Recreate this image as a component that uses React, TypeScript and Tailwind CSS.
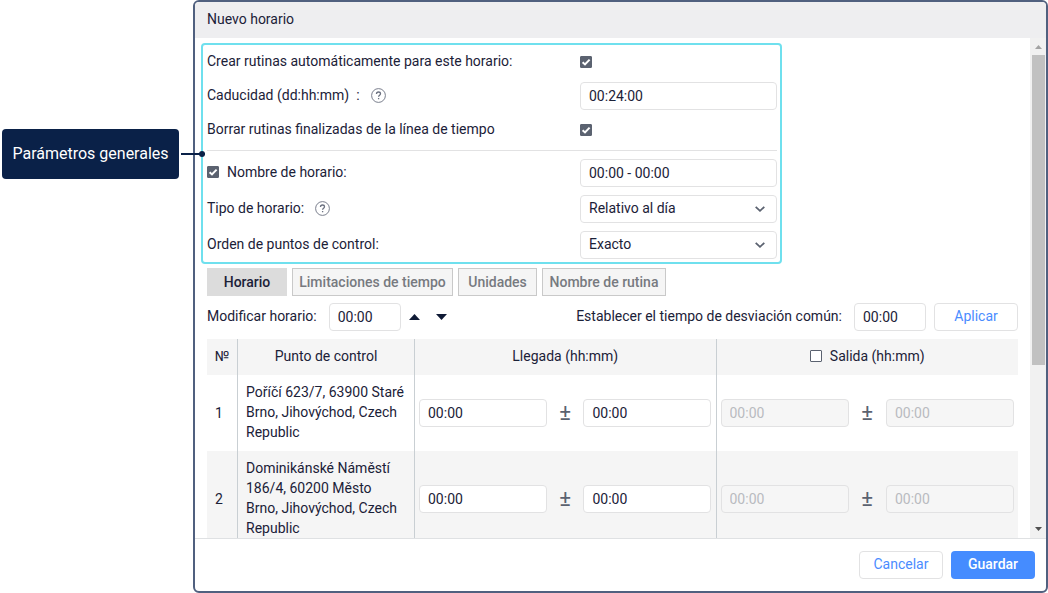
import clsx from 'clsx'
import type { InputHTMLAttributes, ReactNode, SelectHTMLAttributes } from 'react'

const tabs = [
  { label: 'Horario', width: 'w-20', active: true },
  { label: 'Limitaciones de tiempo', width: 'w-[161px]' },
  { label: 'Unidades', width: 'w-[79px]' },
  { label: 'Nombre de rutina', width: 'w-[124px]' },
]

const checkpoints = [
  'Poříčí 623/7, 63900 Staré Brno, Jihovýchod, Czech Republic',
  'Dominikánské Náměstí 186/4, 60200 Město Brno, Jihovýchod, Czech Republic',
]

const TextInput = ({ className, ...props }: InputHTMLAttributes<HTMLInputElement>) => (
  <input
    type="text"
    className={clsx(
      'h-7 min-w-0 rounded border border-[#e2e2e3] bg-white px-2 text-sm text-[#1b2138] disabled:bg-[#f6f6f6] disabled:text-[#b9bbc0]',
      className
    )}
    {...props}
  />
)

const Checkbox = (props: InputHTMLAttributes<HTMLInputElement>) => (
  <span className="grid size-3 shrink-0">
    <input
      type="checkbox"
      className="peer col-start-1 row-start-1 size-3 appearance-none rounded-[1px] border border-[#5b6270] bg-white checked:bg-[#5b6270]"
      {...props}
    />
    <svg
      viewBox="0 0 12 12"
      className="pointer-events-none invisible col-start-1 row-start-1 size-3 peer-checked:visible"
      fill="none"
      stroke="#fff"
      strokeWidth="2"
    >
      <path d="M2.6 6.2 5 8.4l4.6-4.8" />
    </svg>
  </span>
)

const Select = ({ children, ...props }: SelectHTMLAttributes<HTMLSelectElement>) => (
  <span className="grid items-center">
    <select
      className="col-start-1 row-start-1 h-7 w-full appearance-none rounded border border-[#e2e2e3] bg-white px-2 pb-0.5 text-sm text-[#1b2138]"
      {...props}
    >
      {children}
    </select>
    <svg
      viewBox="0 0 10 6"
      className="pointer-events-none col-start-1 row-start-1 mr-3 h-1.5 w-2.5 justify-self-end"
      fill="none"
      stroke="#5b6270"
      strokeWidth="1.8"
    >
      <path d="m.7.8 4.3 4L9.3.8" />
    </svg>
  </span>
)

const HelpButton = () => (
  <button type="button" aria-label="Ayuda">
    <svg viewBox="0 0 15 15" className="size-[15px]" fill="none" stroke="#6b7180">
      <circle cx="7.5" cy="7.5" r="6.9" strokeWidth="0.9" />
      <path
        d="M5.5 6c0-1.3.9-2 2-2s2 .7 2 1.8c0 1.4-1.9 1.5-1.9 3M7.6 10v1.3"
        strokeWidth="1.3"
      />
    </svg>
  </button>
)

const Field = ({ label, children }: { label: ReactNode; children: ReactNode }) => (
  <div className="grid grid-cols-[373px_1fr] items-center">
    <div className="flex items-center pb-0.5">{label}</div>
    {children}
  </div>
)

const TimePair = ({ name, disabled }: { name: string; disabled?: boolean }) => (
  <div className="flex items-center justify-between">
    <TextInput
      className="w-32"
      aria-label={name}
      defaultValue="00:00"
      disabled={disabled}
    />
    <span className="text-[22px] leading-7 text-[#5b6270]">±</span>
    <TextInput
      className="w-32"
      aria-label={`${name}, desviación`}
      defaultValue="00:00"
      disabled={disabled}
    />
  </div>
)

const Callout = () => (
  <aside className="w-[193px] shrink-0 pt-[129px] pl-0.5">
    <div className="relative flex h-[50px] w-[177px] items-center justify-center rounded bg-[#0a2148] text-base text-white">
      Parámetros generales
      <span className="absolute top-6 left-full z-10 ml-0.5 flex h-0.5 w-6 items-center justify-end bg-[#0a2148]">
        <span className="size-1.5 shrink-0 rounded-full bg-[#0a2148]" />
      </span>
    </div>
  </aside>
)

const GeneralSettings = () => (
  <section className="max-w-[581px] rounded border-2 border-[#6fe0ee] pr-[3px] pb-[3px] pl-1">
    <div className="grid auto-rows-[34px]">
      <Field
        label={
          <label htmlFor="auto">Crear rutinas automáticamente para este horario:</label>
        }
      >
        <Checkbox id="auto" defaultChecked />
      </Field>
      <Field
        label={
          <>
            <label htmlFor="expiry" className="mr-[11px] whitespace-pre">
              Caducidad (dd:hh:mm){'  '}:
            </label>
            <HelpButton />
          </>
        }
      >
        <TextInput id="expiry" defaultValue="00:24:00" />
      </Field>
      <Field
        label={
          <label htmlFor="clear">Borrar rutinas finalizadas de la línea de tiempo</label>
        }
      >
        <Checkbox id="clear" defaultChecked />
      </Field>
    </div>
    <hr className="mt-[3px] border-[#e2e2e3]" />
    <div className="grid gap-2 pt-2">
      <Field
        label={
          <label className="flex items-center gap-2">
            <Checkbox defaultChecked />
            Nombre de horario:
          </label>
        }
      >
        <TextInput aria-label="Nombre de horario" defaultValue="00:00 - 00:00" />
      </Field>
      <Field
        label={
          <>
            <label htmlFor="type" className="mr-[11px]">
              Tipo de horario:
            </label>
            <HelpButton />
          </>
        }
      >
        <Select id="type">
          <option>Relativo al día</option>
        </Select>
      </Field>
      <Field label={<label htmlFor="order">Orden de puntos de control:</label>}>
        <Select id="order">
          <option>Exacto</option>
        </Select>
      </Field>
    </div>
  </section>
)

const Schedule = () => (
  <section className="pr-3 pl-1.5">
    <div className="mt-1 flex gap-[5px]">
      {tabs.map(({ label, width, active }) => (
        <button
          key={label}
          type="button"
          className={clsx(
            'h-7 border font-medium whitespace-nowrap',
            width,
            active
              ? 'border-[#dcdcdc] bg-[#dcdcdc] text-[#1b2138]'
              : 'border-[#c9c9c9] bg-[#f5f5f5] text-[#777a80]'
          )}
        >
          {label}
        </button>
      ))}
    </div>
    <div className="mt-[7px] flex items-center">
      <label htmlFor="shift" className="mr-3 pb-0.5">
        Modificar horario:
      </label>
      <TextInput id="shift" className="w-[72px]" defaultValue="00:00" />
      <button type="button" aria-label="Adelantar" className="ml-2">
        <svg viewBox="0 0 11 6" className="h-1.5 w-[11px]" fill="#0f1a35">
          <path d="M0 6 5.5 0 11 6z" />
        </svg>
      </button>
      <button type="button" aria-label="Retrasar" className="ml-4">
        <svg viewBox="0 0 11 6" className="h-1.5 w-[11px]" fill="#0f1a35">
          <path d="M0 0h11L5.5 6z" />
        </svg>
      </button>
      <label htmlFor="deviation" className="mr-3 ml-auto pb-0.5">
        Establecer el tiempo de desviación común:
      </label>
      <TextInput id="deviation" className="w-[72px]" defaultValue="00:00" />
      <button
        type="button"
        className="ml-2 h-7 w-[84px] rounded border border-[#e2e2e3] pb-0.5 text-[#4a8cff]"
      >
        Aplicar
      </button>
    </div>
    <table className="mt-2 w-full table-fixed border-separate border-spacing-0">
      <colgroup>
        <col className="w-[31px]" />
        <col className="w-[177px]" />
        <col />
        <col />
      </colgroup>
      <thead>
        <tr className="h-9 bg-[#f5f5f5] *:border-[#c9cfd3] *:p-0 *:pb-0.5 *:font-normal *:not-last:border-r">
          <th>№</th>
          <th>Punto de control</th>
          <th>Llegada (hh:mm)</th>
          <th>
            <label className="inline-flex items-center gap-2">
              <Checkbox />
              Salida (hh:mm)
            </label>
          </th>
        </tr>
      </thead>
      <tbody>
        {checkpoints.map((address, index) => (
          <tr
            key={address}
            className="even:bg-[#f5f5f5] *:border-[#c9cfd3] *:not-last:border-r"
          >
            <td className="p-2">{index + 1}</td>
            <td className="px-2 pt-[7px] pb-[9px]">{address}</td>
            <td className="px-1">
              <TimePair name="Llegada" />
            </td>
            <td className="px-1">
              <TimePair name="Salida" disabled />
            </td>
          </tr>
        ))}
      </tbody>
    </table>
  </section>
)

const ScrollBar = () => (
  <div className="flex w-4 shrink-0 flex-col items-center bg-[#f1f1f1]" aria-hidden="true">
    <svg viewBox="0 0 16 17" className="h-[17px] w-4" fill="#a3a3a3">
      <path d="M5 11h7L8.500 7z" />
    </svg>
    <div className="ml-px h-[62%] w-[13px] bg-[#c1c1c1]" />
    <svg viewBox="0 0 16 17" className="mt-auto h-[17px] w-4" fill="#505050">
      <path d="M5 6h7l-3.500 4z" />
    </svg>
  </div>
)

const App = () => (
  <main className="flex h-screen bg-white font-[Roboto,sans-serif] text-sm text-[#1b2138]">
    <Callout />
    <div className="flex min-w-0 flex-1 flex-col overflow-hidden rounded-md border-2 border-[#50607f]">
      <header className="h-9 shrink-0 bg-[#eeeef0] px-3 leading-[34px]">Nuevo horario</header>
      <div className="flex min-h-0 flex-1">
        <div className="min-w-0 flex-1 overflow-hidden pt-[5px] pl-1.5">
          <GeneralSettings />
          <Schedule />
        </div>
        <ScrollBar />
      </div>
      <footer className="flex shrink-0 justify-end gap-2 border-t border-[#dfe1e3] px-[11px] pt-3 pb-3">
        <button
          type="button"
          className="h-7 w-[84px] rounded border border-[#e2e2e3] pb-0.5 text-[#4a8cff]"
        >
          Cancelar
        </button>
        <button
          type="button"
          className="h-7 w-[84px] rounded bg-[#458cff] pb-0.5 font-medium text-white"
        >
          Guardar
        </button>
      </footer>
    </div>
  </main>
)

export default App
